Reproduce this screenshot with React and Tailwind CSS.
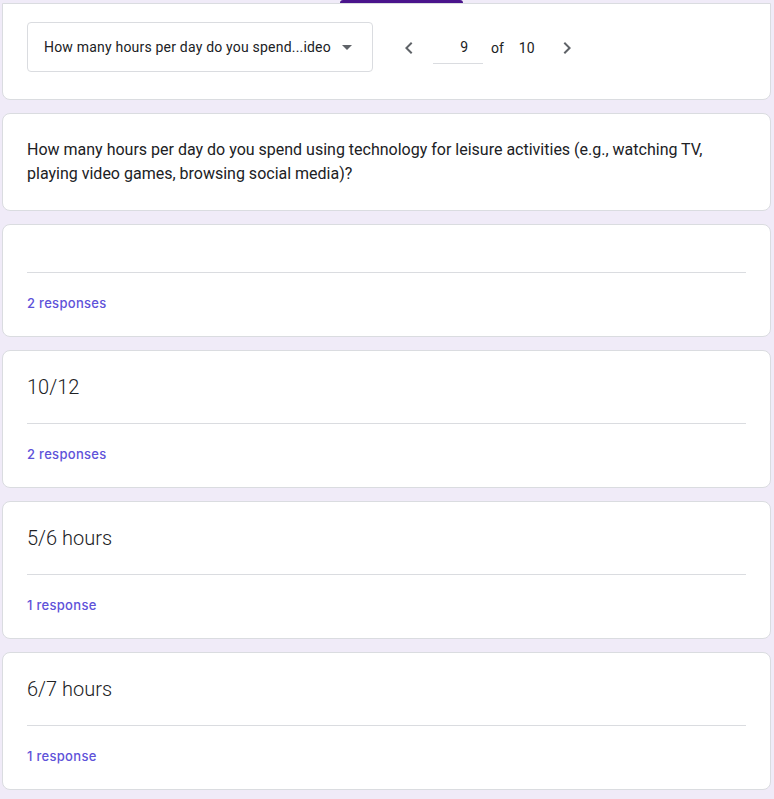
import React from 'react';

const answers = [
  { label: '', count: '2 responses' },
  { label: '10/12', count: '2 responses' },
  { label: '5/6 hours', count: '1 response' },
  { label: '6/7 hours', count: '1 response' },
];

const ChevronLeft = () => (
  <svg width="24" height="24" viewBox="0 0 24 24" fill="#5f6368">
    <path d="M15.41 7.41 14 6l-6 6 6 6 1.41-1.41L10.83 12z" />
  </svg>
);

const ChevronRight = () => (
  <svg width="24" height="24" viewBox="0 0 24 24" fill="#5f6368">
    <path d="M10 6 8.59 7.41 13.17 12l-4.58 4.59L10 18l6-6z" />
  </svg>
);

const AnswerCard = ({ label, count }) => (
  <div className="bg-white border border-[#dadce0] rounded-lg px-6 pt-6 pb-6">
    {label && (
      <div className="text-[20px] leading-6 text-[#202124] font-light">{label}</div>
    )}
    <div className={`border-t border-[#dadce0] ${label ? 'mt-6' : 'mt-[23px]'}`}></div>
    <div
      className="pt-[21px] text-[13px] leading-[18px] font-medium tracking-[0.3px] text-[#5e52d9]"
      style={{ fontFamily: 'Inter, "Noto Sans", sans-serif' }}
    >
      {count}
    </div>
  </div>
);

export default function App() {
  return (
    <div
      className="min-h-screen bg-[#f0ebf8] pl-[2px] pr-[3px] pb-6"
      style={{ fontFamily: 'Roboto, "Liberation Sans", sans-serif' }}
    >
      <div className="relative">
        {/* tab indicator */}
        <div className="absolute left-[338px] top-0 h-[3px] w-[123px] bg-[#4a148c] rounded-t"></div>
      </div>

      <div className="flex flex-col gap-[13px] pt-[3px]">
        {/* navigation card */}
        <div className="bg-white border border-[#dadce0] border-t rounded-b-lg px-6 pt-[18px] pb-[27px] flex items-center">
          <div className="w-[346px] h-[50px] border border-[#dadce0] rounded flex items-center pl-4 pr-4">
            <span className="flex-1 text-sm tracking-[0.2px] text-[#202124] overflow-hidden whitespace-nowrap">
              How many hours per day do you spend...ideo games, browsing social media)?
            </span>
            <span className="ml-[10px] mr-1 w-0 h-0 border-l-[5px] border-r-[5px] border-t-[5px] border-l-transparent border-r-transparent border-t-[#5f6368]"></span>
          </div>
          <div className="flex items-center ml-[24px] pt-px">
            <ChevronLeft />
            <div className="ml-[12px] w-[50px] h-[32px] border-b border-[#dadce0] flex items-center justify-end pr-[15px] text-sm text-[#202124]">
              9
            </div>
            <span className="ml-2 text-sm text-[#202124]">of</span>
            <span className="ml-[15px] text-sm text-[#202124]">10</span>
            <span className="ml-5">
              <ChevronRight />
            </span>
          </div>
        </div>

        {/* question card */}
        <div className="bg-white border border-[#dadce0] rounded-lg px-6 pt-6 pb-6">
          <p className="text-base leading-6 text-[#202124]">
            How many hours per day do you spend using technology for leisure activities (e.g., watching TV, playing video games, browsing social media)?
          </p>
        </div>

        {answers.map((a, i) => (
          <AnswerCard key={i} label={a.label} count={a.count} />
        ))}
      </div>
    </div>
  );
}
